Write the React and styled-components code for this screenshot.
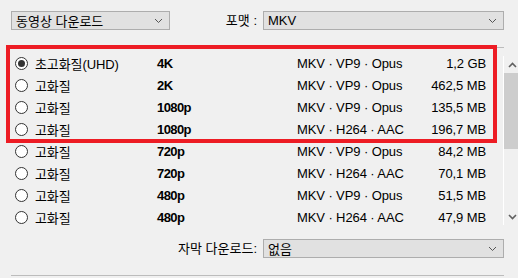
import React from 'react'
import styled, { createGlobalStyle } from 'styled-components'

const Global = createGlobalStyle`
  html, body {
    margin: 0;
    padding: 0;
    background: #f0f0f0;
    overflow: hidden;
  }
  body {
    font-family: "Liberation Sans", "Noto Sans CJK KR", sans-serif;
    font-size: 13px;
    color: #000;
  }
`

const Page = styled.div`
  position: relative;
  width: 493px;
  padding: 11px 0 0 11px;
`

const TopRow = styled.div`
  display: flex;
  align-items: center;
  height: 19px;
`

const Label = styled.div`
  margin-left: auto;
  margin-right: 6px;
  white-space: nowrap;
  line-height: 19px;
`

const Combo = styled.div`
  box-sizing: border-box;
  width: ${p => p.$width}px;
  height: 19px;
  display: flex;
  align-items: center;
  justify-content: space-between;
  padding: 0 6px 0 4px;
  background: #e1e1e1;
  border: 1px solid #adadad;
  white-space: nowrap;
`

const Chevron = () => (
  <svg width="9" height="6" viewBox="0 0 9 6">
    <path d="M1 1 L4.5 4.5 L8 1" fill="none" stroke="#555" strokeWidth="1" />
  </svg>
)

const Rule = styled.div`
  height: 1px;
  background: #bcbcbc;
  margin-top: ${p => p.$top}px;
  width: 493px;
`

const ListArea = styled.div`
  display: flex;
  width: 509px;
  height: 182px;
`

const Rows = styled.div`
  flex: 1;
  padding-top: 4px;
`

const Row = styled.div`
  display: grid;
  grid-template-columns: 20px 122px 140px 1fr auto;
  align-items: center;
  height: 22px;
  padding: 0 17px 0 4px;
  white-space: nowrap;
  letter-spacing: -0.1px;
`

const Radio = styled.span`
  box-sizing: border-box;
  width: 13px;
  height: 13px;
  border-radius: 50%;
  border: 1px solid #333;
  background: #fff;
  display: flex;
  align-items: center;
  justify-content: center;
  &::after {
    content: '';
    width: 7px;
    height: 7px;
    border-radius: 50%;
    background: ${p => (p.$checked ? '#333' : 'transparent')};
  }
`

const Res = styled.span`
  font-weight: bold;
  font-size: 13px;
  letter-spacing: -0.6px;
`

const Size = styled.span`
  text-align: right;
`

const Scrollbar = styled.div`
  box-sizing: border-box;
  width: 17px;
  margin-top: 8px;
  height: 169px;
  border-left: 1px solid #fff;
  display: flex;
  flex-direction: column;
  align-items: stretch;
`

const ArrowBtn = styled.div`
  height: 17px;
  display: flex;
  align-items: center;
  justify-content: center;
`

const Thumb = styled.div`
  height: 76px;
  background: #cdcdcd;
`

const Track = styled.div`
  flex: 1;
`

const BottomRow = styled.div`
  display: flex;
  align-items: center;
  height: 19px;
  margin-top: 9px;
`

const Highlight = styled.div`
  position: absolute;
  left: 6px;
  top: 45px;
  width: 491px;
  height: 98px;
  box-sizing: border-box;
  border: 4px solid #ed1c24;
  pointer-events: none;
`

const formats = [
  ['초고화질(UHD)', '4K', 'MKV · VP9 · Opus', '1,2 GB', true],
  ['고화질', '2K', 'MKV · VP9 · Opus', '462,5 MB'],
  ['고화질', '1080p', 'MKV · VP9 · Opus', '135,5 MB'],
  ['고화질', '1080p', 'MKV · H264 · AAC', '196,7 MB'],
  ['고화질', '720p', 'MKV · VP9 · Opus', '84,2 MB'],
  ['고화질', '720p', 'MKV · H264 · AAC', '70,1 MB'],
  ['고화질', '480p', 'MKV · VP9 · Opus', '51,5 MB'],
  ['고화질', '480p', 'MKV · H264 · AAC', '47,9 MB'],
]

export default function App() {
  return (
    <Page>
      <Global />
      <TopRow>
        <Combo $width={159}>
          동영상 다운로드
          <Chevron />
        </Combo>
        <Label>포맷 :</Label>
        <Combo $width={241}>
          MKV
          <Chevron />
        </Combo>
      </TopRow>
      <Rule $top={17} />
      <ListArea>
        <Rows>
          {formats.map(([label, res, fmt, size, checked], i) => (
            <Row key={i}>
              <Radio $checked={checked} />
              <span>{label}</span>
              <Res>{res}</Res>
              <span>{fmt}</span>
              <Size>{size}</Size>
            </Row>
          ))}
        </Rows>
        <Scrollbar>
          <ArrowBtn>
            <svg width="9" height="6" viewBox="0 0 9 6">
              <path d="M1 5 L4.5 1.5 L8 5" fill="none" stroke="#606060" strokeWidth="1.6" />
            </svg>
          </ArrowBtn>
          <Thumb />
          <Track />
          <ArrowBtn>
            <svg width="9" height="6" viewBox="0 0 9 6">
              <path d="M1 1 L4.5 4.5 L8 1" fill="none" stroke="#606060" strokeWidth="1.6" />
            </svg>
          </ArrowBtn>
        </Scrollbar>
      </ListArea>
      <BottomRow>
        <Label>자막 다운로드:</Label>
        <Combo $width={241}>
          없음
          <Chevron />
        </Combo>
      </BottomRow>
      <Rule $top={17} />
      <Highlight />
    </Page>
  )
}
